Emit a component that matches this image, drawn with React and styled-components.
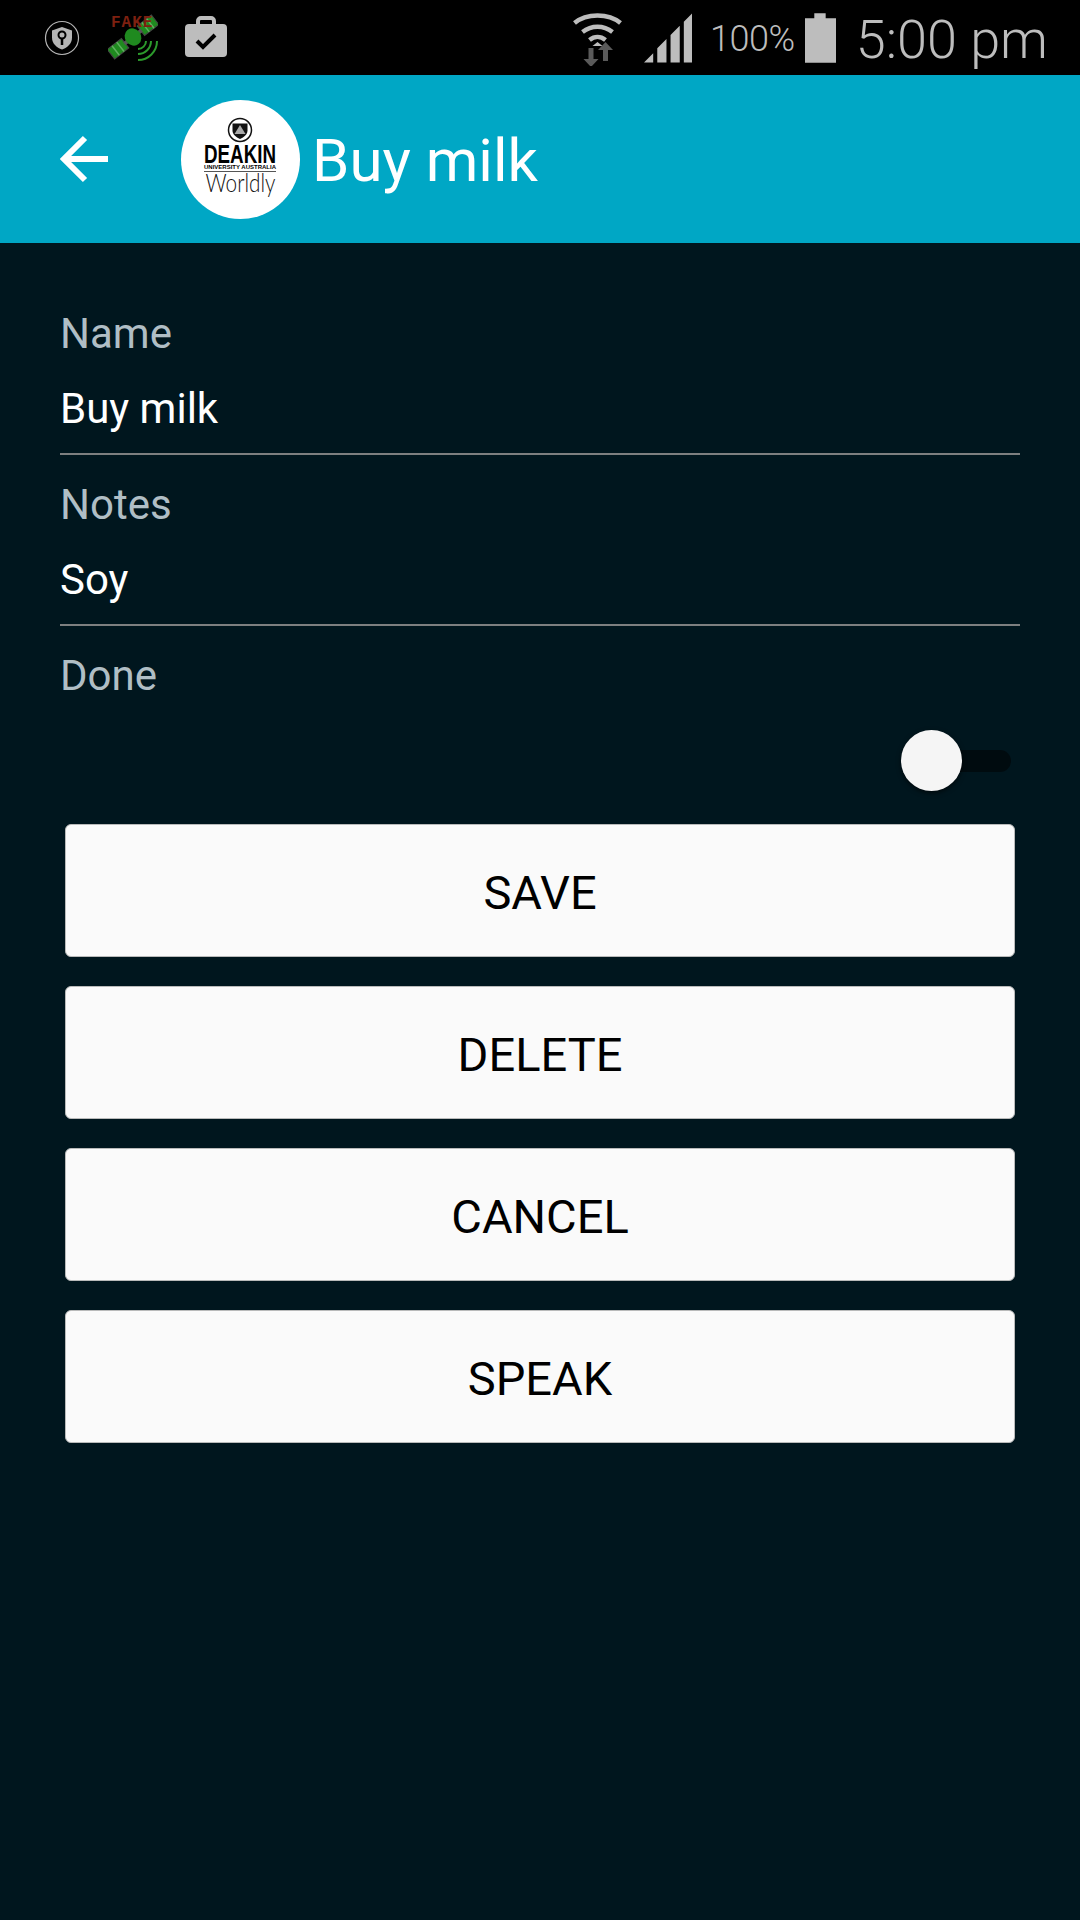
import React from "react";
import styled, { createGlobalStyle } from "styled-components";

const GlobalStyle = createGlobalStyle`
  html, body {
    margin: 0;
    padding: 0;
    background: #00161e;
    font-family: Roboto, sans-serif;
  }
`;

const Screen = styled.main`
  width: 1080px;
  height: 1920px;
  display: flex;
  flex-direction: column;
  background: #00161e;
  overflow: hidden;
`;

const StatusBar = styled.div`
  height: 75px;
  flex: none;
  background: #000;
  display: flex;
  align-items: center;
  justify-content: space-between;
  padding: 0 32px 0 44px;
`;

const StatusGroup = styled.div`
  display: flex;
  align-items: center;
`;

const Battery = styled.span`
  font-size: 36px;
  color: #bdbdbd;
  letter-spacing: -0.4px;
  margin: 2px 10px 0 0;
  font-weight: 300;
`;

const Clock = styled.span`
  font-size: 54px;
  color: #bdbdbd;
  font-weight: 300;
  margin: 3px 0 0 20px;
`;

const AppBar = styled.header`
  height: 168px;
  flex: none;
  background: #00a7c5;
  display: flex;
  align-items: center;
  padding-left: 60px;
`;

const BackButton = styled.svg`
  width: 50px;
  height: 50px;
  flex: none;
  margin-right: 71px;
`;

const Logo = styled.svg`
  width: 119px;
  height: 119px;
  flex: none;
`;

const Title = styled.h1`
  margin: 2px 0 0 12px;
  font-size: 60px;
  font-weight: 400;
  color: #fff;
`;

const Form = styled.section`
  display: flex;
  flex-direction: column;
  padding: 68px 60px 0;
`;

const FieldLabel = styled.label`
  font-size: 42px;
  line-height: 46px;
  color: #b0bec5;
`;

const FieldValue = styled.div`
  font-size: 42px;
  line-height: 46px;
  color: #fff;
  margin-top: 29px;
  padding-bottom: 21px;
  border-bottom: 2px solid #7d7f80;
  margin-bottom: 27px;
`;

const SwitchRow = styled.div`
  display: flex;
  justify-content: flex-end;
  padding-right: 9px;
  margin-top: 31px;
`;

const Track = styled.div`
  position: relative;
  width: 66px;
  height: 22px;
  border-radius: 11px;
  background: #000b0f;
  margin: 20px 0;
`;

const Knob = styled.div`
  position: absolute;
  left: -44px;
  top: -20px;
  width: 61px;
  height: 61px;
  border-radius: 50%;
  background: #f5f5f5;
  box-shadow: 0 2px 5px rgba(0, 0, 0, 0.6);
`;

const Buttons = styled.div`
  display: flex;
  flex-direction: column;
  gap: 29px;
  padding: 32px 5px 0;
`;

const Button = styled.button`
  height: 133px;
  border: 1px solid #b9baba;
  border-radius: 6px;
  background: #fafafa;
  color: #000;
  font: 400 47px Roboto, sans-serif;
  padding: 3px 0 0;
`;

const ShieldIcon = () => (
  <svg width="36" height="36" viewBox="0 0 36 36" style={{ flex: "none" }}>
    <circle cx="18" cy="18" r="16.5" fill="none" stroke="#b5b5b5" strokeWidth="1.2" />
    <path d="M18 7l10 3.500v7c0 6-4.500 10-10 12-5.500-2-10-6-10-12v-7z" fill="#b5b5b5" />
    <circle cx="18" cy="15" r="3.500" fill="none" stroke="#000" strokeWidth="2" />
    <path d="M18 18v7" stroke="#000" strokeWidth="2.500" />
  </svg>
);

const FakeGpsIcon = () => (
  <svg width="50" height="50" viewBox="0 0 50 50" style={{ marginLeft: 28, flex: "none" }}>
    <g transform="translate(0 2) rotate(-38 25 22)">
      <rect x="-3" y="16" width="18" height="12" fill="#1f8a1f" stroke="#444" strokeWidth="1" />
      <rect x="35" y="16" width="18" height="12" fill="#1f8a1f" stroke="#444" strokeWidth="1" />
      <path d="M3 16v12M9 16v12M41 16v12M47 16v12" stroke="#5fb05f" strokeWidth="1.500" />
      <rect x="14" y="20" width="22" height="4" fill="#555" />
      <ellipse cx="25" cy="22" rx="8" ry="9" fill="#1f8a1f" />
    </g>
    <path d="M30 36a8 8 0 0 0 8-8M30 41a13 13 0 0 0 13-13M30 47a19 19 0 0 0 19-19" fill="none" stroke="#2c9a2c" strokeWidth="2" />
    <text x="3" y="14" fontFamily="Liberation Mono, monospace" fontWeight="700" fontSize="16" letterSpacing="1" fill="#7e2010">FAKE</text>
  </svg>
);

const BriefcaseIcon = () => (
  <svg width="42" height="41" viewBox="0 0 42 41" style={{ margin: "0 0 3px 27px", flex: "none" }}>
    <path d="M13 9V5a3 3 0 0 1 3-3h10a3 3 0 0 1 3 3v4" fill="none" stroke="#bdbdbd" strokeWidth="4" />
    <rect x="0" y="8" width="42" height="33" rx="4" fill="#bdbdbd" />
    <path d="M12 25l6 6 12-12" fill="none" stroke="#000" strokeWidth="4" />
  </svg>
);

const WifiIcon = () => (
  <svg width="51" height="56" viewBox="0 0 50 56" style={{ flex: "none", marginRight: 21 }}>
    <path d="M2 13C14 3 36 3 48 13M10 22c9-7 21-7 30 0M17 30c5-4 11-4 16 0" fill="none" stroke="#bdbdbd" strokeWidth="4.500" />
    <path d="M20 36l5-4 5 4z" fill="#bdbdbd" />
    <path d="M16 38h5v11h5l-7.500 8-7.500-8h5z" fill="#5a5a5a" />
    <path d="M33 32l7.500 8h-5v11h-5V40h-5z" fill="#5a5a5a" />
  </svg>
);

const SignalIcon = () => (
  <svg width="48" height="50" viewBox="0 0 47 48" style={{ flex: "none", marginRight: 18 }}>
    <path d="M0 48L9 39V48zM13 48V34L22 25V48zM26 48V21L35 12V48zM39 48V8L47 0V48z" fill="#bdbdbd" />
  </svg>
);

const BatteryIcon = () => (
  <svg width="31" height="50" viewBox="0 0 30 48" style={{ flex: "none" }}>
    <path d="M9 0h11v5h10v43H0V5h9z" fill="#bdbdbd" />
  </svg>
);

const DeakinLogo = () => (
  <Logo viewBox="0 0 119 119">
    <circle cx="59.500" cy="59.500" r="59.500" fill="#fff" />
    <circle cx="59" cy="30" r="11.500" fill="none" stroke="#111" strokeWidth="1.500" />
    <path d="M51.500 23.500h15v7c0 4-3.500 6.500-7.500 8.500-4-2-7.500-4.500-7.500-8.500z" fill="#111" />
    <path d="M59 25l5.500 9h-11z" fill="#aaa" />
    <text x="23" y="62.700" fontFamily="Liberation Sans, sans-serif" fontWeight="700" fontSize="25" textLength="72" lengthAdjust="spacingAndGlyphs" fill="#000">DEAKIN</text>
    <text x="23" y="69" fontFamily="Liberation Sans, sans-serif" fontWeight="700" fontSize="6" textLength="72" lengthAdjust="spacingAndGlyphs" fill="#000">UNIVERSITY AUSTRALIA</text>
    <path d="M23 71.500h72" stroke="#555" strokeWidth="1" />
    <text x="24.500" y="91.700" fontFamily="Lato, sans-serif" fontWeight="300" fontSize="25" textLength="70" lengthAdjust="spacingAndGlyphs" fill="#111">Worldly</text>
  </Logo>
);

const App = () => {
  const buttons = ["SAVE", "DELETE", "CANCEL", "SPEAK"];
  return (
    <Screen>
      <GlobalStyle />
      <StatusBar>
        <StatusGroup>
          <ShieldIcon />
          <FakeGpsIcon />
          <BriefcaseIcon />
        </StatusGroup>
        <StatusGroup>
          <WifiIcon />
          <SignalIcon />
          <Battery>100%</Battery>
          <BatteryIcon />
          <Clock>5:00 pm</Clock>
        </StatusGroup>
      </StatusBar>
      <AppBar>
        <BackButton viewBox="0 0 50 50">
          <path d="M48 25H5M25 4L4 25l21 21" fill="none" stroke="#fff" strokeWidth="6" />
        </BackButton>
        <DeakinLogo />
        <Title>Buy milk</Title>
      </AppBar>
      <Form>
        <FieldLabel>Name</FieldLabel>
        <FieldValue>Buy milk</FieldValue>
        <FieldLabel>Notes</FieldLabel>
        <FieldValue>Soy</FieldValue>
        <FieldLabel>Done</FieldLabel>
        <SwitchRow>
          <Track>
            <Knob />
          </Track>
        </SwitchRow>
        <Buttons>
          {buttons.map((label) => (
            <Button key={label}>{label}</Button>
          ))}
        </Buttons>
      </Form>
    </Screen>
  );
};

export default App;
